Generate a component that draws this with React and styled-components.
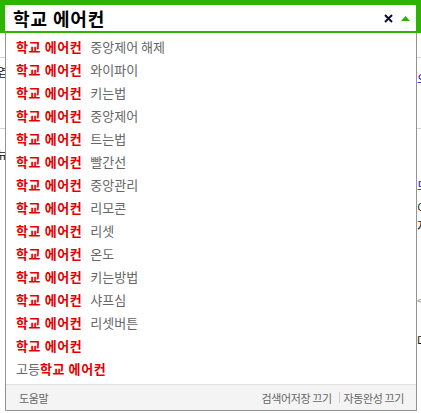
import React from "react";
import styled, {createGlobalStyle} from "styled-components";

const GlobalStyle = createGlobalStyle`
  html, body {
    margin: 0;
    padding: 0;
    background: #fff;
  }
  body {
    font-family: "Noto Sans CJK KR", "Noto Sans", sans-serif;
  }
`;

const Page = styled.div`
  position: relative;
  width: 421px;
  height: 413px;
  overflow: hidden;
  background: #fff;
`;

/* page content that sits behind the dropdown */
const Backdrop = styled.div`
  display: flex;
  flex-direction: column;
  padding-top: 57px;
  font-size: 12px;
  line-height: 12px;
`;

const Rule = styled.div`
  height: 0;
  border-top: 1px solid #d5d5d5;
`;

const BackRow = styled.div`
  display: flex;
  justify-content: space-between;
  height: ${props => props.h}px;
  padding-top: ${props => props.pt || 0}px;
  box-sizing: border-box;
`;

const BackText = styled.span`
  color: ${props => props.blue ? "#0000d0" : props.muted ? "#999" : "#111"};
  margin-left: ${props => props.ml || 0}px;
  margin-top: ${props => props.mt || 0}px;
  white-space: nowrap;
`;

const RightStack = styled.div`
  display: flex;
  flex-direction: column;
  width: 4px;
  overflow: visible;
`;

const BottomStrip = styled.div`
  display: flex;
  align-items: flex-start;
  gap: 75px;
  padding-left: 22px;
  margin-top: 2px;
`;

const Thumb = styled.div`
  width: 13px;
  height: 14px;
  background: #5fbf3a;
`;

const LinkLine = styled.span`
  color: #0000d0;
  font-size: 12px;
  white-space: nowrap;
  text-decoration: underline;
`;

/* search widget */
const SearchLayer = styled.div`
  position: absolute;
  top: 0;
  left: 0;
  width: 421px;
`;

const SearchBox = styled.div`
  display: flex;
  align-items: center;
  height: 26px;
  border: 5px solid #2db400;
  border-bottom-width: 2px;
  background: #fff;
  padding: 0 0 0 8px;
`;

const Query = styled.div`
  flex: 1;
  font-size: 18px;
  font-weight: 700;
  color: #000;
  line-height: 26px;
  letter-spacing: 0.9px;
`;

const IconBtn = styled.span`
  display: flex;
  align-items: center;
  justify-content: center;
  width: ${props => props.w}px;
  height: 26px;
  margin-right: ${props => props.mr || 0}px;
`;

const Dropdown = styled.div`
  margin-left: 5px;
  width: 412px;
  box-sizing: border-box;
  border: 1px solid #939393;
  border-top: none;
  background: #fff;
`;

const List = styled.ul`
  list-style: none;
  margin: 0;
  padding: 2px 0 4px;
`;

const Item = styled.li`
  height: 23px;
  line-height: 23px;
  padding-left: 10px;
  font-size: 13px;
  color: #666;
  white-space: nowrap;
`;

const Hl = styled.span`
  color: #e10000;
  font-weight: 700;
  letter-spacing: 0.6px;
`;

const Rest = styled.span`
  margin-left: ${props => props.gap ? 8 : 0}px;
`;

const Footer = styled.div`
  display: flex;
  justify-content: space-between;
  align-items: center;
  height: 25px;
  padding: 0 12px 0 13px;
  background: #f4f4f4;
  border-top: 1px solid #e0e0e0;
  font-size: 11px;
  color: #666;
  letter-spacing: -0.4px;
`;

const FooterLinks = styled.div`
  display: flex;
  align-items: center;
`;

const Sep = styled.span`
  width: 1px;
  height: 11px;
  background: #cfcfcf;
  margin: 0 4px 0 7px;
`;

const suggestions = [
  "중앙제어 해제",
  "와이파이",
  "키는법",
  "중앙제어",
  "트는법",
  "빨간선",
  "중앙관리",
  "리모콘",
  "리셋",
  "온도",
  "키는방법",
  "샤프심",
  "리셋버튼",
];

export default function App() {
  return (
    <Page>
      <GlobalStyle />
      <Backdrop>
        <Rule />
        <BackRow h={70} pt={8}>
          <BackText ml={-3}>엽</BackText>
          <RightStack>
            <BackText blue mt={7}>오</BackText>
          </RightStack>
        </BackRow>
        <Rule />
        <BackRow h={282} pt={19}>
          <BackText ml={-3}>뉴</BackText>
          <RightStack>
            <BackText blue mt={32}>모</BackText>
            <BackText mt={10}>이</BackText>
            <BackText mt={6}>지</BackText>
            <BackText muted mt={62}>&lt;</BackText>
            <BackText mt={29}>다</BackText>
          </RightStack>
        </BackRow>
        <BottomStrip>
          <Thumb />
          <LinkLine>학교 에어컨 중앙제어 해제 방법 알아보기 바로가기</LinkLine>
        </BottomStrip>
      </Backdrop>

      <SearchLayer>
        <SearchBox>
          <Query>학교 에어컨</Query>
          <IconBtn w={12} mr={6}>
            <svg width="9" height="9" viewBox="0 0 9 9">
              <path d="M1 1 L8 8 M8 1 L1 8" stroke="#0b1030" strokeWidth="2" />
            </svg>
          </IconBtn>
          <IconBtn w={10} mr={6}>
            <svg width="9" height="5" viewBox="0 0 9 5">
              <path d="M0 5 L4.5 0 L9 5 Z" fill="#2db400" />
            </svg>
          </IconBtn>
        </SearchBox>
        <Dropdown>
          <List>
            {suggestions.map((s, i) => (
              <Item key={i}>
                <Hl>학교 에어컨</Hl>
                <Rest gap>{s}</Rest>
              </Item>
            ))}
            <Item>
              <Hl>학교 에어컨</Hl>
            </Item>
            <Item>
              <Rest>고등</Rest>
              <Hl>학교 에어컨</Hl>
            </Item>
          </List>
          <Footer>
            <span>도움말</span>
            <FooterLinks>
              <span>검색어저장 끄기</span>
              <Sep />
              <span>자동완성 끄기</span>
            </FooterLinks>
          </Footer>
        </Dropdown>
      </SearchLayer>
    </Page>
  );
}
